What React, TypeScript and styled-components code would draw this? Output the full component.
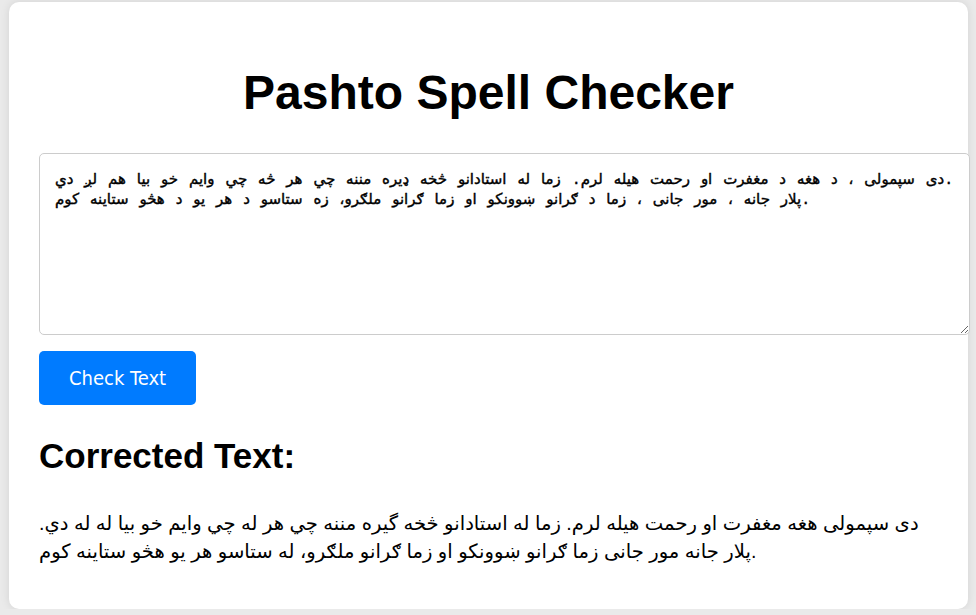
import React, { useState } from "react";
import styled, { createGlobalStyle } from "styled-components";

const GlobalStyle = createGlobalStyle`
  html, body {
    margin: 0;
    background: #eaeaea;
  }
  body {
    padding: 2px 8px 0 9px;
    font-family: "DejaVu Sans Condensed", "DejaVu Sans", Tahoma, sans-serif;
    color: #000;
  }
`;

const Card = styled.main`
  background: #fff;
  border-radius: 10px;
  padding: 30px;
  box-shadow: 0 0 10px rgba(0, 0, 0, 0.1);
`;

const Title = styled.h1`
  margin: 33px 0;
  font-family: "Liberation Sans", Arial, sans-serif;
  font-size: 48px;
  font-weight: bold;
  text-align: center;
`;

const Input = styled.textarea`
  display: block;
  width: 100%;
  height: 150px;
  margin: 0 0 16px;
  padding: 17px 15px 13px;
  border: 1px solid #ccc;
  border-radius: 5px;
  font-family: "Liberation Mono", "DejaVu Sans", monospace;
  font-size: 15px;
  word-spacing: 1.9px;
  line-height: 20px;
  -webkit-text-stroke: 0.4px #000;
  color: #000;
  background: #fff;
  resize: both;
  box-sizing: content-box;
`;

const CheckButton = styled.button`
  display: block;
  padding: 15px 30px;
  border: none;
  border-radius: 5px;
  background: #007bff;
  color: #fff;
  font-family: "DejaVu Sans Condensed", "DejaVu Sans", Tahoma, sans-serif;
  font-size: 20px;
  line-height: 24px;
  cursor: pointer;
`;

const Subtitle = styled.h2`
  margin: 31px 0 33px;
  font-family: "Liberation Sans", Arial, sans-serif;
  font-size: 35px;
  font-weight: bold;
`;

const Result = styled.p`
  margin: 18px 0 14px;
  font-family: "Liberation Sans", "DejaVu Sans", sans-serif;
  font-size: 19.6px;
  line-height: 28px;
`;

const INITIAL =
  "دی سپمولی ، د هغه د مغفرت او رحمت هیله لرم. زما له استادانو څخه ډیره مننه چي هر څه چي وایم خو بیا هم لږ دي.\n" +
  "پلار جانه ، مور جانی ، زما د ګرانو ښوونکو او زما ګرانو ملګرو، زه ستاسو د هر یو د هڅو ستاینه کوم.";

const CORRECTED =
  "دی سپمولی هغه مغفرت او رحمت هیله لرم. زما له استادانو څخه گیره مننه چي هر له چي وایم خو بیا له له دي. " +
  "پلار جانه مور جانی زما ګرانو ښوونکو او زما ګرانو ملګرو، له ستاسو هر یو هڅو ستاینه کوم.";

export default function App() {
  const [text, setText] = useState(INITIAL);
  return (
    <>
      <GlobalStyle />
      <Card>
        <Title>Pashto Spell Checker</Title>
        <Input value={text} onChange={(e) => setText(e.target.value)} />
        <CheckButton type="button">Check Text</CheckButton>
        <Subtitle>Corrected Text:</Subtitle>
        <Result>{CORRECTED}</Result>
      </Card>
    </>
  );
}
